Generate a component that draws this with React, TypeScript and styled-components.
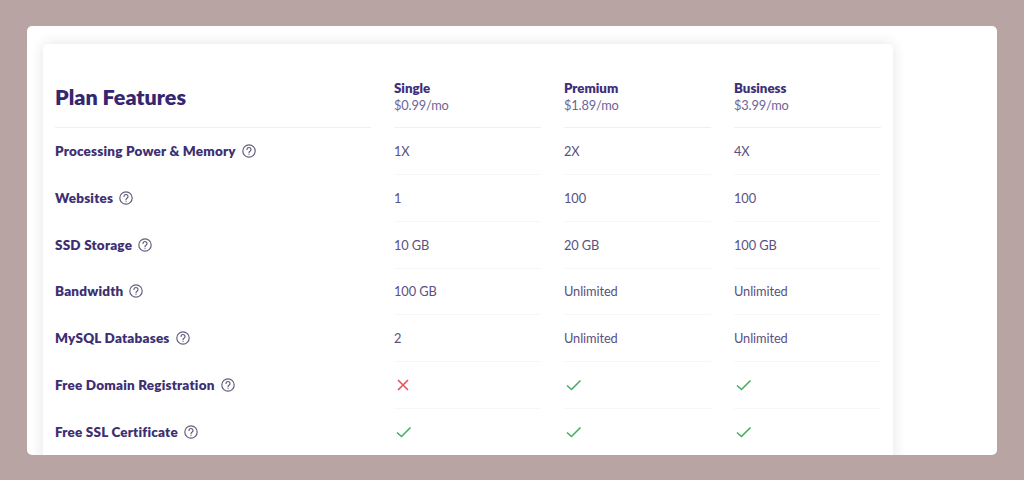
import React from 'react';
import styled, { createGlobalStyle } from 'styled-components';

const GlobalStyle = createGlobalStyle`
  html, body {
    margin: 0;
    height: 480px;
    overflow: hidden;
    background: #b7a4a3;
    font-family: Lato, 'Noto Sans', sans-serif;
  }
`;

const Page = styled.div`
  box-sizing: border-box;
  height: 480px;
  padding: 26px 27px 25px;
`;

const Panel = styled.div`
  box-sizing: border-box;
  height: 429px;
  padding: 18px 16px 0;
  background: #fff;
  border-radius: 5px;
  overflow: hidden;
`;

const Card = styled.div`
  box-sizing: border-box;
  width: 850px;
  padding: 0 12px 20px;
  background: #fff;
  border-radius: 5px;
  box-shadow: 0 0 14px rgba(40, 30, 70, 0.13);
`;

const Row = styled.div`
  display: grid;
  grid-template-columns: 316px repeat(3, 147px);
  column-gap: 23px;
`;

const HeadCell = styled.div`
  box-sizing: border-box;
  height: 84px;
  padding-top: 36px;
  border-bottom: 1px solid #f0eff8;
`;

const Title = styled.h2`
  margin: 0;
  padding-top: 3px;
  font-size: 21.5px;
  line-height: 28px;
  font-weight: 800;
  color: #36266f;
`;

const PlanName = styled.div`
  font-size: 13.3px;
  line-height: 17px;
  font-weight: 800;
  color: #3d2f7a;
`;

const PlanPrice = styled.div`
  font-size: 12.8px;
  line-height: 16px;
  letter-spacing: -0.15px;
  color: #6d6499;
`;

const Cell = styled.div`
  box-sizing: border-box;
  height: 46.85px;
  display: flex;
  align-items: center;
  gap: 6px;
  font-size: 12.8px;
  letter-spacing: -0.1px;
  color: #5b5180;
  border-bottom: 1px solid #f7f6fb;
`;

const FeatureCell = styled(Cell)`
  border-bottom-color: transparent;
  font-size: 13.5px;
  font-weight: 800;
  letter-spacing: 0.2px;
  color: #3d2f72;
`;

const HelpIcon = styled.svg`
  width: 14px;
  height: 14px;
  flex: none;
  fill: none;
  stroke: #65607f;
  stroke-width: 1.2;
  stroke-linecap: round;
`;

const MarkIcon = styled.svg<{ $ok: boolean }>`
  width: 18px;
  height: 18px;
  fill: none;
  stroke: ${({ $ok }) => ($ok ? '#46ad63' : '#e2535c')};
  stroke-width: 1.6;
  margin-left: ${({ $ok }) => ($ok ? '1px' : '0')};
`;

function Help() {
  return (
    <HelpIcon viewBox="0 0 14 14">
      <circle cx="7" cy="7" r="6.2" />
      <path d="M5 5.5a2 2 0 1 1 3.2 1.6C7.5 7.6 7 8 7 8.8" />
      <path d="M7 10.5v.1" />
    </HelpIcon>
  );
}

function Mark({ ok }: { ok: boolean }) {
  return (
    <MarkIcon $ok={ok} viewBox="0 0 18 18">
      {ok ? <path d="M2 9.5 6.5 13.5 15.5 4.5" /> : <path d="M4 4 14 14M14 4 4 14" />}
    </MarkIcon>
  );
}

const plans = [
  { name: 'Single', price: '$0.99/mo' },
  { name: 'Premium', price: '$1.89/mo' },
  { name: 'Business', price: '$3.99/mo' },
];

const features: { label: string; values: (string | boolean)[] }[] = [
  { label: 'Processing Power & Memory', values: ['1X', '2X', '4X'] },
  { label: 'Websites', values: ['1', '100', '100'] },
  { label: 'SSD Storage', values: ['10 GB', '20 GB', '100 GB'] },
  { label: 'Bandwidth', values: ['100 GB', 'Unlimited', 'Unlimited'] },
  { label: 'MySQL Databases', values: ['2', 'Unlimited', 'Unlimited'] },
  { label: 'Free Domain Registration', values: [false, true, true] },
  { label: 'Free SSL Certificate', values: [true, true, true] },
];

export default function App() {
  return (
    <>
      <GlobalStyle />
      <Page>
        <Panel>
          <Card>
            <Row>
              <HeadCell>
                <Title>Plan Features</Title>
              </HeadCell>
              {plans.map((plan) => (
                <HeadCell key={plan.name}>
                  <PlanName>{plan.name}</PlanName>
                  <PlanPrice>{plan.price}</PlanPrice>
                </HeadCell>
              ))}
            </Row>
            {features.map((feature) => (
              <Row key={feature.label}>
                <FeatureCell>
                  {feature.label}
                  <Help />
                </FeatureCell>
                {feature.values.map((value, i) => (
                  <Cell key={i}>
                    {typeof value === 'boolean' ? <Mark ok={value} /> : value}
                  </Cell>
                ))}
              </Row>
            ))}
          </Card>
        </Panel>
      </Page>
    </>
  );
}
